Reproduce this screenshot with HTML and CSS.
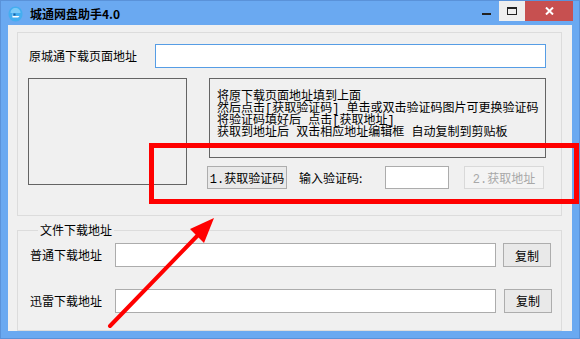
FILE: index.html
```html
<!DOCTYPE html>
<html lang="zh-CN">
<head>
  <meta charset="UTF-8" />
  <title>城通网盘助手4.0</title>
  <link rel="stylesheet" href="styles.css">
</head>
<body>
  <div class="window">
    <div class="titlebar">
      <svg class="app-icon" width="15" height="16" viewBox="0 0 15 16">
        <path d="M7.5 0.5c4 0 7 3 7 7.5s-3 7.5-7 7.5-7-3-7-7.5 3-7.5 7-7.5z" fill="#44aef0" />
        <path d="M2.5 7c0-3 2.2-5 5-5s5 2 5 5z" fill="#7ccaf8" />
        <path d="M4 6v4h7.5l-1.3 1.5H4.5z" fill="#fff" />
        <rect x="5.5" y="7.5" width="2" height="2" fill="#1b5f9e" />
      </svg>
      <span class="title">城通网盘助手4.0</span>
      <div class="controls">
        <span class="ctl ctl-min"><i></i></span>
        <span class="ctl ctl-max"><i></i></span>
        <span class="ctl ctl-close">
          <svg width="9" height="8" viewBox="0 0 9 8">
            <path d="M1 0.5l7 7M8 0.5l-7 7" stroke="#fff" stroke-width="2" />
          </svg>
        </span>
      </div>
    </div>

    <div class="client">
      <div class="group group-page">
        <div class="page-row">
          <span class="label label-page">原城通下载页面地址</span>
          <input type="text" class="field field-page focused" />
        </div>
        <div class="captcha">
          <div class="captcha-img"></div>
          <div class="captcha-side">
            <div class="hint">
              将原下载页面地址填到上面<br>
              然后点击[获取验证码] 单击或双击验证码图片可更换验证码<br>
              将验证码填好后 点击[获取地址]<br>
              获取到地址后 双击相应地址编辑框 自动复制到剪贴板
            </div>
            <div class="actions">
              <button class="btn btn-captcha">1.获取验证码</button>
              <span class="label label-code">输入验证码:</span>
              <input type="text" class="field field-code" />
              <button class="btn btn-fetch" disabled>2.获取地址</button>
            </div>
          </div>
        </div>
      </div>

      <fieldset class="group group-links">
        <legend>文件下载地址</legend>
        <div class="link-row">
          <span class="label label-link">普通下载地址</span>
          <input type="text" class="field field-link" />
          <button class="btn btn-copy">复制</button>
        </div>
        <div class="link-row link-row-second">
          <span class="label label-link">迅雷下载地址</span>
          <input type="text" class="field field-link" />
          <button class="btn btn-copy">复制</button>
        </div>
      </fieldset>
    </div>

    <!-- red markup drawn over the window -->
    <svg class="annotation" width="580" height="339" viewBox="0 0 580 339">
      <rect x="151.5" y="145.5" width="425" height="56" fill="none" stroke="#ff0000" stroke-width="5" />
      <line x1="110" y1="326" x2="200" y2="233" stroke="#ff0000" stroke-width="4" stroke-linecap="round" />
      <polygon points="214,218 190,229 204,243" fill="#ff0000" />
    </svg>
  </div>
</body>
</html>
```

FILE: styles.css
```css
body {
  margin: 0;
  font-family: "Noto Sans CJK SC", "Liberation Sans", sans-serif;
  font-size: 12px;
  color: #000;
  background: #6aa9f1;
}

.window {
  position: relative;
  width: 580px;
  height: 339px;
  box-sizing: border-box;
  border: 1px solid #5a92d9;
  background-color: #6aa9f1;
  display: flex;
  flex-direction: column;
}

/* title bar */
.titlebar {
  height: 29px;
  display: flex;
  align-items: flex-start;
  padding-left: 7px;
}

.app-icon {
  margin-top: 5px;
  flex: none;
}

.title {
  margin-left: 7px;
  margin-top: 6px;
  line-height: 14px;
  font-weight: bold;
  font-size: 12px;
}

.controls {
  margin-left: auto;
  margin-right: 6px;
  display: flex;
  height: 20px;
}

.ctl {
  height: 20px;
  display: flex;
  align-items: center;
  justify-content: center;
}

.ctl-min {
  width: 26px;
}

.ctl-min i {
  width: 9px;
  height: 2px;
  margin-top: 6px;
  background: #222;
}

.ctl-max {
  width: 26px;
  background: #efefef;
}

.ctl-max i {
  width: 8px;
  height: 5px;
  border: 1px solid #222;
  border-top-width: 2px;
}

.ctl-close {
  width: 48px;
  background: #c75050;
}

/* client area */
.client {
  flex: 1;
  margin: 0 7px 7px 7px;
  background: #f0f0f0;
  padding: 7px 10px 0 9px;
}

.group {
  border: 1px solid #dcdcdc;
}

.group-page {
  height: 171px;
  padding: 11px 15px 0 10px;
}

.label {
  line-height: 16px;
  white-space: nowrap;
}

.page-row {
  display: flex;
  align-items: center;
}

.label-page {
  width: 126px;
  padding-left: 1px;
}

.field {
  box-sizing: border-box;
  height: 23px;
  margin: 0;
  padding: 0 3px;
  border: 1px solid #acacac;
  background: #fff;
  outline: none;
  font: inherit;
}

.field-page {
  width: 392px;
  height: 24px;
}

.focused {
  border-color: #569de5;
}

.captcha {
  display: flex;
  margin-top: 10px;
}

.captcha-img {
  width: 158px;
  height: 105px;
  border: 1px solid #646464;
}

.captcha-side {
  margin-left: 22px;
}

/* the old win32 text is SimSun, half-width chars are narrow mono */
.hint {
  width: 322px;
  height: 66px;
  border: 1px solid #646464;
  padding: 12px 6px 0 7px;
  font-family: "Liberation Mono", "Noto Sans CJK SC", monospace;
  line-height: 12px;
  white-space: nowrap;
  overflow: hidden;
}

.actions {
  display: flex;
  align-items: center;
  margin-top: 8px;
  margin-left: -2px;
}

.btn {
  box-sizing: border-box;
  height: 23px;
  padding: 0;
  border: 1px solid #adadad;
  background: #e9e9e9;
  font: inherit;
  color: #000;
}

.btn-captcha,
.btn-fetch {
  font-family: "Liberation Mono", "Noto Sans CJK SC", monospace;
}

.btn-captcha {
  width: 80px;
}

.label-code {
  margin-left: 12px;
  width: 86px;
}

.field-code {
  width: 64px;
}

.btn-fetch {
  width: 80px;
  margin-left: 15px;
  background: #f4f4f4;
  border-color: #d9d9d9;
  color: #a8a8a8;
}

/* download links */
.group-links {
  margin: 7px 0 0 0;
  padding: 6px 0 17px 12px;
  min-width: 0;
}

.group-links legend {
  margin-left: 8px;
  padding: 0 2px;
  line-height: 14px;
}

.link-row {
  display: flex;
  align-items: center;
}

.link-row-second {
  margin-top: 22px;
}

.label-link {
  width: 85px;
}

.field-link {
  width: 381px;
  height: 24px;
}

.btn-copy {
  width: 48px;
  height: 24px;
  margin-left: 7px;
}

.link-row-second .btn-copy {
  margin-left: 8px;
  margin-top: -1px;
}

.annotation {
  position: absolute;
  left: -1px;
  top: -1px;
  pointer-events: none;
}
```
